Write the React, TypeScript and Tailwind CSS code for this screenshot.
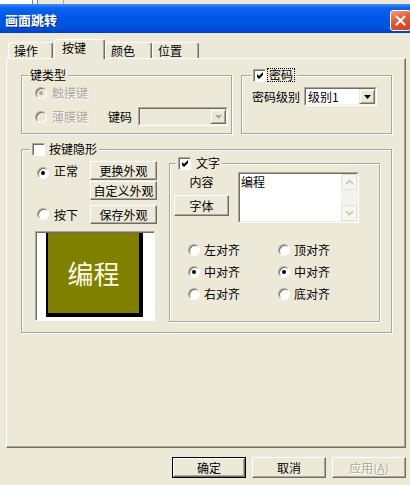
import React from "react";

const FONT = "font-['Noto_Sans_CJK_SC','Liberation_Sans',sans-serif]";
const DIS = "text-[#ACA899] [text-shadow:1px_1px_0_#ffffff]";

function Radio({ checked = false, disabled = false }: { checked?: boolean; disabled?: boolean }) {
  return (
    <span
      className={`inline-flex shrink-0 w-[12px] h-[12px] rounded-full border border-t-[#ACA899] border-l-[#ACA899] border-r-white border-b-white shadow-[inset_1px_1px_0_#716F64] items-center justify-center ${
        disabled ? "bg-[#ECE9D8]" : "bg-white"
      }`}
    >
      {checked && <span className={`w-[4px] h-[4px] rounded-full ${disabled ? "bg-[#ACA899]" : "bg-black"}`} />}
    </span>
  );
}

function Check({ checked = false }: { checked?: boolean }) {
  return (
    <span className="inline-flex shrink-0 w-[13px] h-[13px] border border-t-[#ACA899] border-l-[#ACA899] border-r-white border-b-white bg-white shadow-[inset_1px_1px_0_#716F64] items-center justify-center">
      {checked && (
        <svg width="7" height="7" viewBox="0 0 7 7" className="ml-[1px] mt-[1px]">
          <path d="M0 2 L2 4 L6 0 L6 3 L2 7 L0 5 Z" fill="black" />
        </svg>
      )}
    </span>
  );
}

function Btn({
  children,
  className = "",
  disabled = false,
}: {
  children: React.ReactNode;
  className?: string;
  disabled?: boolean;
}) {
  return (
    <div
      className={`flex shrink-0 items-center justify-center bg-[#ECE9D8] border border-t-white border-l-white border-r-[#716F64] border-b-[#716F64] shadow-[inset_-1px_-1px_0_#ACA899] ${
        disabled ? DIS : ""
      } ${className}`}
    >
      {children}
    </div>
  );
}

function DropBtn({ disabled = false }: { disabled?: boolean }) {
  return (
    <div className="flex w-[16px] h-[15px] shrink-0 items-center justify-center bg-[#ECE9D8] border border-t-[#ECE9D8] border-l-[#ECE9D8] border-r-[#716F64] border-b-[#716F64] shadow-[inset_1px_1px_0_#ffffff,inset_-1px_-1px_0_#ACA899]">
      <svg width="7" height="4" viewBox="0 0 7 4">
        <path d="M0 0 H7 L3.5 4 Z" fill={disabled ? "#ACA899" : "black"} />
      </svg>
    </div>
  );
}

function Combo({ className = "", value = "", disabled = false }: { className?: string; value?: string; disabled?: boolean }) {
  return (
    <div className={`h-[19px] shrink-0 border border-t-[#ACA899] border-l-[#ACA899] border-r-white border-b-white ${className}`}>
      <div
        className={`flex h-full w-full border border-t-[#716F64] border-l-[#716F64] border-r-[#F1EFE2] border-b-[#F1EFE2] ${
          disabled ? "bg-[#ECE9D8]" : "bg-white"
        }`}
      >
        <div className="flex-1 pl-[2px] leading-[15px]">{value}</div>
        <DropBtn disabled={disabled} />
      </div>
    </div>
  );
}

function Group({
  title,
  titleClass = "left-[6px]",
  className = "",
  children,
}: {
  title: React.ReactNode;
  titleClass?: string;
  className?: string;
  children?: React.ReactNode;
}) {
  return (
    <div className={`relative shrink-0 border border-[#ACA899] shadow-[inset_1px_1px_0_#ffffff,1px_1px_0_#ffffff] ${className}`}>
      <div className={`absolute -top-[8px] flex h-[14px] items-center bg-[#ECE9D8] px-[2px] ${titleClass}`}>{title}</div>
      {children}
    </div>
  );
}

function Tab({ label, selected = false, className = "" }: { label: string; selected?: boolean; className?: string }) {
  return (
    <div
      className={`flex shrink-0 items-center bg-[#ECE9D8] border-l border-t border-l-white border-t-white border-r border-r-[#716F64] shadow-[inset_-1px_0_0_#ACA899] rounded-t-[3px] ${
        selected ? "relative z-10 h-[20px] pl-[7px] pb-[3px]" : "h-[16px] mb-[1px] pl-[5px]"
      } ${className}`}
    >
      {label}
    </div>
  );
}

function ScrollArrow({ up }: { up: boolean }) {
  return (
    <div className="flex h-[16px] w-[16px] items-center justify-center rounded-[2px] border border-[#E3E2DA] bg-[#F6F5F0]">
      <svg width="9" height="6" viewBox="0 0 9 6">
        <path d={up ? "M1 5 L4.5 1.5 L8 5" : "M1 1 L4.5 4.5 L8 1"} stroke="#C8C6BA" strokeWidth="1.6" fill="none" />
      </svg>
    </div>
  );
}

export default function App() {
  return (
    <div className={`w-[410px] h-[485px] overflow-hidden bg-[#ECE9D8] text-[12px] leading-[14px] text-black ${FONT}`}>
      {/* remnant of window behind */}
      <div className="flex h-[4px]">
        <div className="w-[32px] bg-white" />
        <div className="w-[1px] bg-[#808080]" />
        <div className="w-[4px] bg-[#F4F3EE]" />
        <div className="w-[1px] bg-[#808080]" />
        <div className="w-[25px]" />
        <div className="w-[1px] bg-[#ACA899]" />
      </div>

      {/* title bar */}
      <div className="flex h-[29px] items-start justify-between overflow-hidden bg-[linear-gradient(180deg,#3D8FFA_0%,#0E62EE_14%,#0057E7_45%,#0052DD_80%,#0040C2_100%)]">
        <div className="pl-[5px] pt-[9px] text-[13px] leading-[14px] font-bold text-white [text-shadow:1px_1px_0_#0A2A8A]">
          画面跳转
        </div>
        <div className="mt-[6px] -mr-[1px] flex h-[21px] w-[21px] shrink-0 items-center justify-center rounded-[3px] border border-white bg-[linear-gradient(160deg,#F2A083_0%,#E2603A_40%,#C8401A_100%)]">
          <svg width="11" height="11" viewBox="0 0 11 11">
            <path d="M1.5 1.5 L9.5 9.5 M9.5 1.5 L1.5 9.5" stroke="white" strokeWidth="2" strokeLinecap="round" />
          </svg>
        </div>
      </div>

      {/* tabs */}
      <div className="mt-[6px] flex h-[20px] items-end -mb-[1px] pl-[8px]">
        <Tab label="操作" className="w-[45px]" />
        <Tab label="按键" selected className="ml-[1px] w-[51px]" />
        <Tab label="颜色" className="w-[47px]" />
        <Tab label="位置" className="w-[47px]" />
      </div>

      {/* panel */}
      <div className="ml-[6px] flex h-[390px] w-[400px] flex-col border border-t-white border-l-white border-r-[#716F64] border-b-[#716F64] shadow-[inset_-1px_-1px_0_#ACA899] pl-[14px] pt-[16px]">
        <div className="flex gap-[9px]">
          <Group title="键类型" className="h-[59px] w-[211px]">
            <div className="flex flex-col pl-[13px] pt-[9px]">
              <div className="flex h-[16px] items-center">
                <Radio checked disabled />
                <span className={`ml-[5px] ${DIS}`}>触摸键</span>
              </div>
              <div className="mt-[6px] flex h-[19px] items-center">
                <div className="flex w-[73px] items-center">
                  <Radio disabled />
                  <span className={`ml-[5px] ${DIS}`}>薄膜键</span>
                </div>
                <span>键码</span>
                <Combo className="ml-[6px] w-[90px]" disabled />
              </div>
            </div>
          </Group>
          <Group
            title={
              <>
                <Check checked />
                <span className="ml-[1px] border border-dotted border-black px-[1px] leading-[12px]">密码</span>
              </>
            }
            titleClass="left-[9px]"
            className="h-[59px] w-[151px]"
          >
            <div className="flex items-center pl-[10px] pt-[11px]">
              <span className="w-[48px]">密码级别</span>
              <Combo className="ml-[4px] w-[73px]" value="级别1" />
            </div>
          </Group>
        </div>

        <Group
          title={
            <>
              <Check />
              <span className="ml-[4px]">按键隐形</span>
            </>
          }
          titleClass="left-[8px]"
          className="mt-[15px] h-[184px] w-[371px]"
        >
          <div className="flex items-start pl-[13px] pt-[11px]">
            {/* left column */}
            <div className="flex w-[122px] flex-col">
              <div className="flex h-[19px] items-center">
                <span className="pl-[2px]">
                  <Radio checked />
                </span>
                <span className="ml-[5px]">正常</span>
                <Btn className="ml-auto h-[19px] w-[67px]">更换外观</Btn>
              </div>
              <Btn className="mt-[1px] h-[19px] w-[67px] self-end">自定义外观</Btn>
              <div className="mt-[5px] flex h-[19px] items-center">
                <span className="pl-[2px]">
                  <Radio />
                </span>
                <span className="ml-[5px]">按下</span>
                <Btn className="ml-auto h-[19px] w-[67px]">保存外观</Btn>
              </div>
              <div className="mt-[7px] flex h-[90px] w-[120px] border border-t-[#ACA899] border-l-[#ACA899] border-r-white border-b-white bg-white pl-[10px] pt-[1px] shadow-[inset_1px_1px_0_#716F64]">
                <div className="flex h-[84px] w-[97px] items-center justify-center border-b-[4px] border-l-[2px] border-r-[4px] border-black bg-[#808000] text-[26px] leading-[30px] text-[#F8F8E2]">
                  编程
                </div>
              </div>
            </div>

            {/* text group */}
            <Group
              title={
                <>
                  <Check checked />
                  <span className="ml-[5px]">文字</span>
                </>
              }
              titleClass="left-[6px]"
              className="ml-[12px] mt-[2px] h-[159px] w-[211px]"
            >
              <div className="flex pl-[4px] pt-[8px]">
                <div className="flex w-[55px] flex-col items-center">
                  <span className="mt-[3px] h-[14px]">内容</span>
                  <Btn className="mt-[6px] h-[21px] w-[55px]">字体</Btn>
                </div>
                <div className="ml-[9px] h-[51px] w-[121px] border border-t-[#ACA899] border-l-[#ACA899] border-r-white border-b-white">
                  <div className="flex h-full w-full border border-t-[#716F64] border-l-[#716F64] border-r-[#F1EFE2] border-b-[#F1EFE2] bg-white">
                    <div className="flex-1 pl-[1px] pt-[1px]">编程</div>
                    <div className="flex w-[16px] flex-col justify-between bg-[#F4F3EE]">
                      <ScrollArrow up />
                      <ScrollArrow up={false} />
                    </div>
                  </div>
                </div>
              </div>
              <div className="mt-[16px] grid grid-cols-[90px_90px] pl-[18px]">
                {[
                  ["左对齐", false],
                  ["顶对齐", false],
                  ["中对齐", true],
                  ["中对齐", true],
                  ["右对齐", false],
                  ["底对齐", false],
                ].map(([t, c], i) => (
                  <div key={i} className="flex h-[22px] items-center">
                    <Radio checked={c as boolean} />
                    <span className="ml-[4px]">{t as string}</span>
                  </div>
                ))}
              </div>
            </Group>
          </div>
        </Group>
      </div>

      {/* bottom buttons */}
      <div className="mt-[9px] flex justify-end gap-[6px] pr-[4px]">
        <div className="h-[21px] w-[74px] border border-black">
          <Btn className="h-full w-full">确定</Btn>
        </div>
        <Btn className="h-[21px] w-[74px]">取消</Btn>
        <Btn className="h-[21px] w-[74px]" disabled>
          应用(<span className="underline">A</span>)
        </Btn>
      </div>
    </div>
  );
}
